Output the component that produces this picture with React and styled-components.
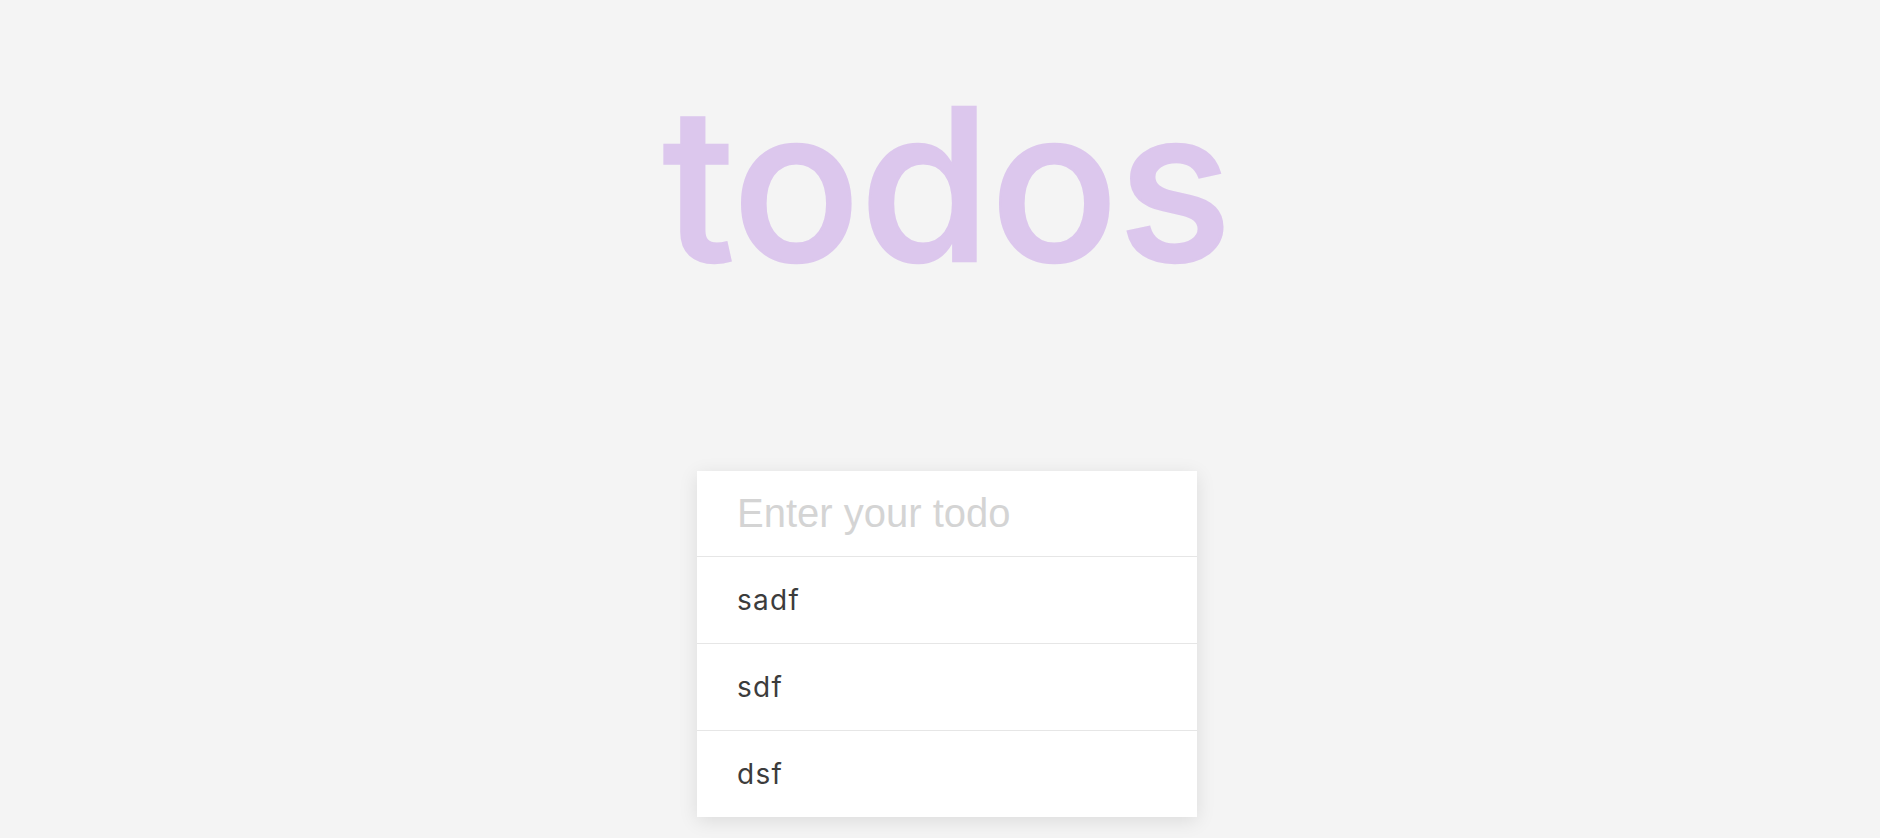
import React from "react";
import styled, { createGlobalStyle } from "styled-components";

const Global = createGlobalStyle`
  html, body {
    margin: 0;
    padding: 0;
    background: #f4f4f4;
  }
  body {
    font-family: Inter, "Noto Sans", sans-serif;
  }
`;

const Page = styled.main`
  display: flex;
  flex-direction: column;
  align-items: center;
  padding-left: 14px;
  min-height: 838px;
  box-sizing: border-box;
`;

const Title = styled.h1`
  margin: 78px 0 0;
  height: 211px;
  font-family: Inter, "Noto Sans", sans-serif;
  font-weight: 500;
  font-size: 212px;
  line-height: 1;
  letter-spacing: -0.5px;
  color: #dcc7ed;
  -webkit-text-stroke: 2.4px #dcc7ed;
`;

const Card = styled.section`
  margin-top: 182px;
  width: 500px;
  background: #ffffff;
  box-shadow: 0 4px 18px rgba(0, 0, 0, 0.1);
  display: flex;
  flex-direction: column;
`;

const Input = styled.input`
  height: 86px;
  box-sizing: border-box;
  border: none;
  border-bottom: 1px solid #e6e6e6;
  padding: 0 40px;
  font-family: "Liberation Sans", Arial, sans-serif;
  font-size: 40px;
  color: #444;
  outline: none;
  background: transparent;
  &::placeholder {
    color: #d4d4d4;
  }
`;

const Item = styled.div`
  height: 86px;
  display: flex;
  align-items: center;
  padding: 0 40px 0 40px;
  font-family: Inter, "Noto Sans", sans-serif;
  font-size: 28px;
  letter-spacing: 1.3px;
  color: #3c3c3c;
  border-top: ${(p) => (p.$first ? "none" : "1px solid #e6e6e6")};
`;

const todos = ["sadf", "sdf", "dsf"];

export default function App() {
  return (
    <>
      <Global />
      <Page>
        <Title>todos</Title>
        <Card>
          <Input placeholder="Enter your todo" />
          {todos.map((t, i) => (
            <Item key={i} $first={i === 0}>
              {t}
            </Item>
          ))}
        </Card>
      </Page>
    </>
  );
}
